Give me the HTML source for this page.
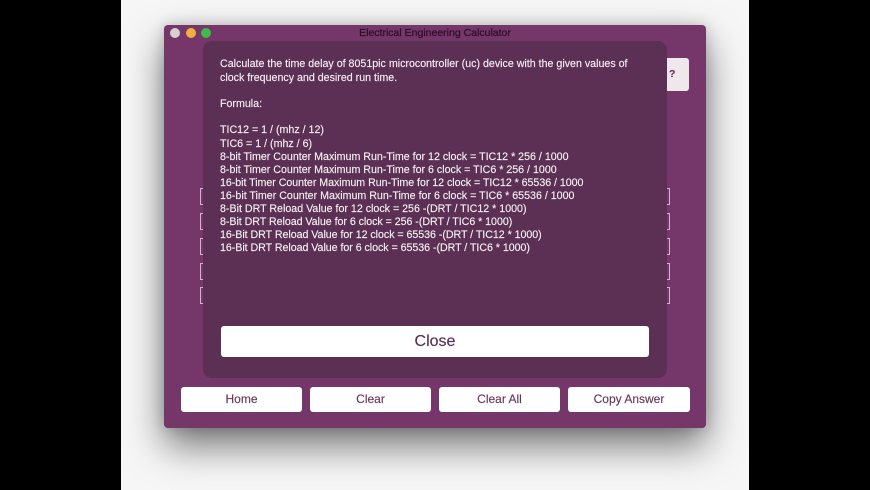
<!DOCTYPE html>
<html>
<head>
<meta charset="utf-8">
<style>
html,body{margin:0;padding:0;width:870px;height:490px;overflow:hidden;background:#000;font-family:"Liberation Sans",sans-serif}
#page{position:absolute;left:121px;top:0;width:628px;height:490px;background:#f6f6f6;overflow:hidden}
#win{position:absolute;left:43px;top:25px;width:542px;height:403px;background:#753669;border-radius:4px;box-shadow:0 18px 38px rgba(0,0,0,.52),0 0 14px rgba(0,0,0,.18)}
.dot{position:absolute;top:28px;width:10px;height:10px;border-radius:50%}
#title{position:absolute;left:164px;top:27px;width:542px;text-align:center;font-size:10.5px;line-height:13px;color:#2a0f25;-webkit-text-stroke:.2px #2a0f25;filter:blur(.3px)}
#panel{position:absolute;left:203px;top:41px;width:464px;height:337px;background:#5c3055;border-radius:9px}
.t{position:absolute;left:220px;font-size:10.66px;line-height:13px;color:#f3eef2;white-space:nowrap;-webkit-text-stroke:.15px #f3eef2;filter:blur(.25px)}
.n{letter-spacing:-.04px}
.btn{position:absolute;background:#fff;border-radius:3px;text-align:center;color:#6a3560;-webkit-text-stroke:.15px #6a3560;filter:blur(.25px)}
.b{top:387px;height:25px;line-height:25px;font-size:12px}
.l,.r{position:absolute;box-sizing:border-box;width:4px;height:17px;border:1px solid #cdb8c9}
.l{left:200px;border-right:0}
.r{left:666px;border-left:0}
</style>
</head>
<body>
<div id="page"><div id="win"></div></div>
<div class="dot" style="left:170px;background:#d5d0d4"></div>
<div class="dot" style="left:186px;background:#f3ae3c"></div>
<div class="dot" style="left:201px;background:#3fb94a"></div>
<div id="title">Electrical Engineering Calculator</div>

<div class="btn" style="left:660px;top:58px;width:29px;height:33px;line-height:33px;font-size:10.5px;font-weight:bold;background:#eee8ec;text-align:left;padding-left:9px;box-sizing:border-box">?</div>

<div class="l" style="top:188px"></div><div class="r" style="top:188px"></div>
<div class="l" style="top:213px"></div><div class="r" style="top:213px"></div>
<div class="l" style="top:238px"></div><div class="r" style="top:238px"></div>
<div class="l" style="top:263px"></div><div class="r" style="top:263px"></div>
<div class="l" style="top:287px"></div><div class="r" style="top:287px"></div>

<div id="panel"></div>
<div class="t" style="top:58px">Calculate the time delay of 8051pic microcontroller (uc) device with the given values of</div>
<div class="t" style="top:72px">clock frequency and desired run time.</div>
<div class="t" style="top:98px">Formula:</div>
<div class="t" style="top:124px">TIC12 = 1 / (mhz / 12)</div>
<div class="t" style="top:138px">TIC6 = 1 / (mhz / 6)</div>
<div class="t" style="top:151px">8-bit Timer Counter Maximum Run-Time for 12 clock = TIC12 * 256 / 1000</div>
<div class="t" style="top:164px">8-bit Timer Counter Maximum Run-Time for 6 clock = TIC6 * 256 / 1000</div>
<div class="t n" style="top:177px">16-bit Timer Counter Maximum Run-Time for 12 clock = TIC12 * 65536 / 1000</div>
<div class="t" style="top:190px">16-bit Timer Counter Maximum Run-Time for 6 clock = TIC6 * 65536 / 1000</div>
<div class="t" style="top:203px">8-Bit DRT Reload Value for 12 clock = 256 -(DRT / TIC12 * 1000)</div>
<div class="t n" style="top:216px">8-Bit DRT Reload Value for 6 clock = 256 -(DRT / TIC6 * 1000)</div>
<div class="t n" style="top:229px">16-Bit DRT Reload Value for 12 clock = 65536 -(DRT / TIC12 * 1000)</div>
<div class="t n" style="top:242px">16-Bit DRT Reload Value for 6 clock = 65536 -(DRT / TIC6 * 1000)</div>

<div class="btn" style="left:221px;top:326px;width:428px;height:31px;line-height:31px;font-size:16px;color:#5c3055;-webkit-text-stroke:.15px #5c3055">Close</div>

<div class="btn b" style="left:181px;width:121px">Home</div>
<div class="btn b" style="left:310px;width:121px">Clear</div>
<div class="btn b" style="left:439px;width:121px">Clear All</div>
<div class="btn b" style="left:568px;width:122px">Copy Answer</div>
</body>
</html>
